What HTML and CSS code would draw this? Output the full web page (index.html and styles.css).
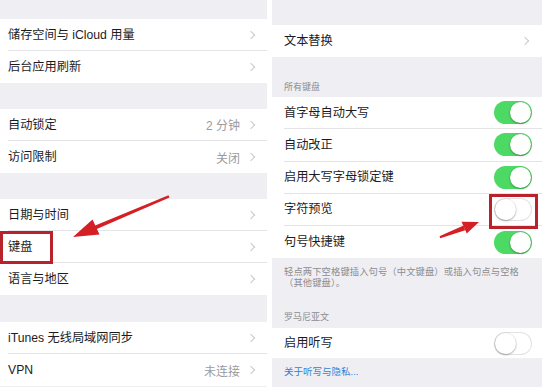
FILE: index.html
```html
<!DOCTYPE html>
<html lang="zh">
<head>
<meta charset="utf-8">
<title>设置</title>
<link rel="stylesheet" href="styles.css">
</head>
<body>
<div class="page">
  <section class="panel left">
    <div class="gap g19"></div>
    <div class="group">
      <div class="row"><div class="in"><span class="label">储存空间与 iCloud 用量</span><span class="acc"><i class="chev"></i></span></div></div>
      <div class="row"><div class="in last"><span class="label">后台应用刷新</span><span class="acc"><i class="chev"></i></span></div></div>
    </div>
    <div class="gap g26"></div>
    <div class="group">
      <div class="row"><div class="in"><span class="label">自动锁定</span><span class="acc"><span class="val">2 分钟</span><i class="chev"></i></span></div></div>
      <div class="row"><div class="in last"><span class="label">访问限制</span><span class="acc"><span class="val">关闭</span><i class="chev"></i></span></div></div>
    </div>
    <div class="gap g26"></div>
    <div class="group">
      <div class="row"><div class="in"><span class="label">日期与时间</span><span class="acc"><i class="chev"></i></span></div></div>
      <div class="row"><div class="in"><span class="label">键盘</span><span class="acc"><i class="chev"></i></span></div></div>
      <div class="row"><div class="in last"><span class="label">语言与地区</span><span class="acc"><i class="chev"></i></span></div></div>
    </div>
    <div class="gap g27"></div>
    <div class="group">
      <div class="row"><div class="in"><span class="label">iTunes 无线局域网同步</span><span class="acc"><i class="chev"></i></span></div></div>
      <div class="row"><div class="in last"><span class="label">VPN</span><span class="acc"><span class="val">未连接</span><i class="chev"></i></span></div></div>
    </div>
  </section>

  <section class="panel right">
    <div class="gap g25"></div>
    <div class="group">
      <div class="row"><div class="in last"><span class="label">文本替换</span><span class="acc"><i class="chev"></i></span></div></div>
    </div>
    <div class="header h40">所有键盘</div>
    <div class="group">
      <div class="row"><div class="in"><span class="label">首字母自动大写</span><span class="switch on"></span></div></div>
      <div class="row"><div class="in"><span class="label">自动改正</span><span class="switch on"></span></div></div>
      <div class="row"><div class="in"><span class="label">启用大写字母锁定键</span><span class="switch on"></span></div></div>
      <div class="row"><div class="in"><span class="label">字符预览</span><span class="switch"></span></div></div>
      <div class="row"><div class="in last"><span class="label">句号快捷键</span><span class="switch on"></span></div></div>
    </div>
    <div class="footer">
      <p class="note">轻点两下空格键插入句号（中文键盘）或插入句点与空格<br>（其他键盘）。</p>
      <div class="header h-sub">罗马尼亚文</div>
    </div>
    <div class="group">
      <div class="row short"><div class="in last"><span class="label">启用听写</span><span class="switch"></span></div></div>
    </div>
    <div class="linkwrap"><span class="link">关于听写与隐私...</span></div>
  </section>

  <svg class="marks" width="555" height="387" viewBox="0 0 555 387" aria-hidden="true">
    <rect x="1.5" y="232.5" width="50" height="30" fill="none" stroke="#b8232b" stroke-width="3"/>
    <rect x="490.5" y="195.5" width="46" height="32" fill="none" stroke="#b8232b" stroke-width="3"/>
    <polygon points="168.5,195.2 169.5,197.6 95.6,229.4 94.6,225.8" fill="#d41f24"/>
    <polygon points="73,237 92.5,219.5 99.5,234.5" fill="#d41f24"/>
    <polygon points="439.5,236.2 440.3,238.2 465.2,230.2 463.6,225.6" fill="#d41f24"/>
    <polygon points="479,222 461.5,221.8 466.8,233.6" fill="#d41f24"/>
  </svg>
</div>
</body>
</html>
```

FILE: styles.css
```css
* { box-sizing: border-box; margin: 0; padding: 0; }

html, body {
  width: 555px;
  height: 387px;
  overflow: hidden;
  background: #ffffff;
}

body {
  font-family: "Liberation Sans", "Noto Sans CJK SC", sans-serif;
  color: #1c1c1e;
}

.page {
  position: relative;
  display: flex;
  gap: 5px;
  width: 555px;
  height: 387px;
}

.panel {
  background: #efeff3;
  height: 387px;
  overflow: hidden;
}

.panel.left { width: 267px; }
.panel.right { width: 270px; }

.gap { background: #efeff3; }
.g19 { height: 19px; }
.g25 { height: 25px; }
.g26 { height: 26px; }
.g27 { height: 27px; }

.group {
  background: #ffffff;
}

.row {
  padding-left: 8px;
  height: 32px;
}

.right .row { padding-left: 12px; height: 32.2px; }
.right .row.short { height: 30px; }

.in {
  display: flex;
  align-items: center;
  justify-content: space-between;
  height: 100%;
  border-bottom: 1px solid #e4e4e7;
  padding-right: 11px;
}

.right .in { padding-right: 10px; }

.in.last { border-bottom: none; }

.label {
  font-size: 12.2px;
  line-height: 14px;
  white-space: nowrap;
}

.acc {
  display: flex;
  align-items: center;
  gap: 8px;
}

.val {
  font-size: 12px;
  color: #9a9aa0;
}

.chev {
  display: block;
  width: 6px;
  height: 6px;
  border-top: 1.3px solid #c8c8cd;
  border-right: 1.3px solid #c8c8cd;
  transform: rotate(45deg);
  margin-right: 2px;
}

.right .chev { margin-right: 4px; }

.header {
  font-size: 9px;
  color: #8c8c91;
  padding-left: 12px;
  display: flex;
  align-items: flex-end;
}

.h40 { height: 40px; padding-bottom: 4px; }

.footer {
  height: 70px;
  padding-top: 9px;
  display: flex;
  flex-direction: column;
}

.note {
  font-size: 9.3px;
  line-height: 10.5px;
  color: #8c8c91;
  padding-left: 12px;
  white-space: nowrap;
  letter-spacing: 0.1px;
}

.h-sub {
  margin-top: auto;
  height: 20px;
  padding-bottom: 5px;
}

.switch {
  position: relative;
  display: block;
  width: 38px;
  height: 23px;
  border-radius: 12px;
  background: #ffffff;
  box-shadow: inset 0 0 0 1px #e3e3e6;
}

.switch::after {
  content: "";
  position: absolute;
  top: 1px;
  left: 1px;
  width: 21px;
  height: 21px;
  border-radius: 50%;
  background: #ffffff;
  box-shadow: 0 1px 2px rgba(0,0,0,0.3), 0 0 0 0.5px rgba(0,0,0,0.08);
}

.switch.on {
  background: #4cd964;
  box-shadow: none;
}

.switch.on::after {
  left: 16px;
}

.linkwrap {
  padding: 3px 0 0 12px;
}

.link {
  font-size: 9.5px;
  color: #2f7fd6;
}

.marks {
  position: absolute;
  left: 0;
  top: 0;
  pointer-events: none;
}
```
